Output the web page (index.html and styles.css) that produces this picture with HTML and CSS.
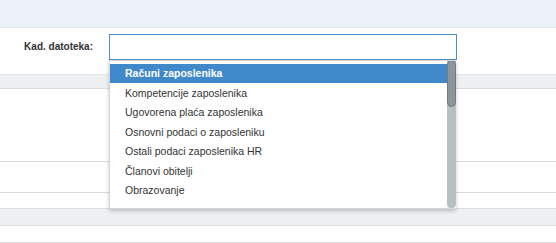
FILE: index.html
```html
<!DOCTYPE html>
<html>
<head>
<meta charset="utf-8">
<link rel="stylesheet" href="styles.css">
</head>
<body>
<div class="page">
  <div class="topbar"></div>
  <div class="form-row">
    <label class="label">Kad. datoteka:</label>
    <div class="select">
      <div class="select-input"></div>
      <div class="dropdown">
        <ul class="options">
          <li class="option active">Računi zaposlenika</li>
          <li class="option">Kompetencije zaposlenika</li>
          <li class="option">Ugovorena plaća zaposlenika</li>
          <li class="option">Osnovni podaci o zaposleniku</li>
          <li class="option">Ostali podaci zaposlenika HR</li>
          <li class="option">Članovi obitelji</li>
          <li class="option">Obrazovanje</li>
        </ul>
        <div class="scrollbar"><div class="thumb"></div></div>
      </div>
    </div>
  </div>
  <div class="band"></div>
  <div class="row row-a"></div>
  <div class="row row-b"></div>
  <div class="row row-c"></div>
  <div class="band band-2"></div>
  <div class="row row-d"></div>
</div>
</body>
</html>
```
FILE: styles.css
```css
html, body {
  margin: 0;
  padding: 0;
  background: #ffffff;
}
.page {
  width: 556px;
  font-family: "Liberation Sans", Arial, sans-serif;
  color: #333333;
}
.topbar {
  height: 27px;
  background: #edf1f8;
  border-bottom: 1px solid #e3e7ec;
}
.form-row {
  height: 40px;
  padding-top: 6px;
  display: grid;
  grid-template-columns: 93px 348px;
  column-gap: 16px;
  align-items: start;
  box-sizing: content-box;
}
.label {
  text-align: right;
  font-size: 10px;
  font-weight: bold;
  line-height: 26px;
  color: #333333;
}
.select {
  position: relative;
}
.select-input {
  height: 24px;
  border: 1px solid #4a8fca;
  background: #ffffff;
}
.dropdown {
  position: absolute;
  left: 0;
  top: 26px;
  width: 346px;
  height: 147px;
  background: #ffffff;
  border: 1px solid #d6d8da;
  border-right: none;
  box-shadow: 0 2px 4px rgba(0, 0, 0, 0.22);
  z-index: 5;
  overflow: hidden;
}
.options {
  list-style: none;
  margin: 0;
  padding: 3px 9px 0 0;
}
.option {
  height: 19.5px;
  line-height: 18.5px;
  padding-left: 15px;
  font-size: 10.5px;
  color: #333333;
  white-space: nowrap;
}
.option.active {
  background: #3f89ca;
  color: #ffffff;
  font-weight: bold;
  height: 18.5px;
  margin-bottom: 1px;
}
.scrollbar {
  position: absolute;
  right: 0;
  top: -1px;
  bottom: 0;
  width: 9px;
  background: #b9bec4;
  border-radius: 0 0 4px 4px;
}
.thumb {
  height: 47px;
  margin-top: 0;
  background: #8d949b;
  border: 1px solid #737a81;
  border-radius: 5px;
  box-sizing: border-box;
}
.band {
  height: 13px;
  background: #eef0f1;
  border-top: 1px solid #e4e6e8;
  border-bottom: 1px solid #dcdedf;
}
.row {
  border-bottom: 1px solid #dcdcdc;
}
.row-a { height: 72px; }
.row-b { height: 30px; }
.row-c { height: 15px; border-bottom: none; }
.band-2 {
  height: 16px;
  border-top: 1px solid #dcdedf;
}
.row-d { height: 16px; }
```
